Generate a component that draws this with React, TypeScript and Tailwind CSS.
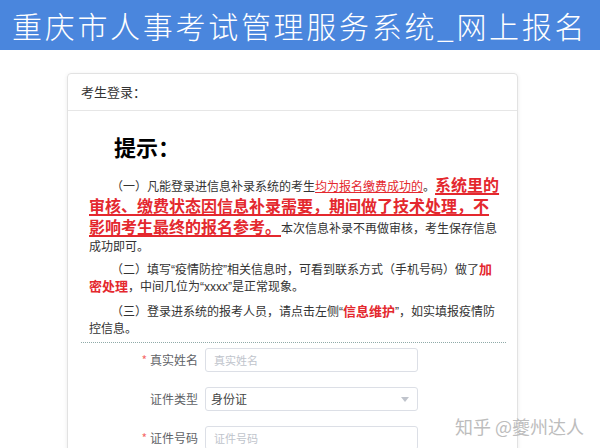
import { ReactNode } from "react";

const red = "text-[#e4282e]";

// narrow curly quotes, as the original page shows them
function Q({ children }: { children: ReactNode }) {
  return <span className="font-['Liberation_Sans',sans-serif] leading-[12px]">{children}</span>;
}

function FormRow({ label, required, children }: { label: string; required?: boolean; children: ReactNode }) {
  return (
    <div className="flex items-center">
      <div className="w-[116px] pr-[7px] text-right text-[12px] text-[#606266]">
        {required && <span className="mr-[3px] text-[#f56c6c]">*</span>}
        {label}
      </div>
      {children}
    </div>
  );
}

export default function App() {
  return (
    <div className="relative h-[448px] w-[600px] overflow-hidden bg-white font-['Noto_Sans_CJK_SC',sans-serif] text-[#333]">
      <header className="flex h-[50px] items-center bg-[#4a86dd] pl-[12px] text-[30px] font-light tracking-[2.7px] text-white">
        重庆市人事考试管理服务系统_网上报名
      </header>

      <div className="pl-[67px] pt-[23px]">
        <div className="w-[451px] rounded-[4px] border border-[#e2e2e2] shadow-[0_1px_4px_rgba(0,0,0,0.08)]">
          <div className="flex h-[37px] items-center border-b border-[#e6e6e6] px-[13px] text-[13px] text-[#333]">
            考生登录：
          </div>

          <div className="pl-[21px] pr-[13px] pt-[22px]">
            <h2 className="pl-[25px] text-[22px] font-bold leading-[26px] text-black">提示：</h2>

            <p className="mt-[15px] indent-[22px] text-[12px] leading-[17px]">
              （一）凡能登录进信息补录系统的考生
              <span className={`${red} underline decoration-[#e4282e]`}>均为报名缴费成功的</span>。
              <span className={`${red} text-[16px] font-bold leading-[21px] underline decoration-2 decoration-[#e4282e] underline-offset-2`}>
                系统里的审核、缴费状态因信息补录需要，期间做了技术处理，不影响考生最终的报名参考。
              </span>
              本次信息补录不再做审核，考生保存信息成功即可。
            </p>

            <p className="mt-[6px] indent-[22px] text-[12px] leading-[17px]">
              （二）填写<Q>“</Q>疫情防控<Q>”</Q>相关信息时，可看到联系方式（手机号码）做了
              <span className={`${red} text-[13px] font-bold leading-[12px]`}>加密处理</span>，中间几位为<Q>“xxxx”</Q>是正常现象。
            </p>

            <p className="mt-[8px] indent-[22px] text-[12px] leading-[17px]">
              （三）登录进系统的报考人员，请点击左侧<Q>“</Q>
              <span className={`${red} text-[13px] font-bold leading-[12px]`}>信息维护</span>
              <Q>”</Q>，如实填报疫情防控信息。
            </p>

            <div className="ml-[-8px] mt-[6px] w-[425px] border-t border-dotted border-[#8faaa8]" />

            <div className="mt-[5px] flex flex-col gap-[15px] pb-[20px]">
              <FormRow label="真实姓名" required>
                <div className="flex h-[24px] w-[213px] items-center rounded-[3px] border border-[#dcdfe6] px-[8px] text-[11px] text-[#c0c4cc]">
                  真实姓名
                </div>
              </FormRow>
              <FormRow label="证件类型">
                <div className="flex h-[24px] w-[213px] items-center justify-between rounded-[3px] border border-[#dcdfe6] pl-[5px] pr-[8px] text-[12px] text-[#444]">
                  身份证
                  <svg width="8" height="5" viewBox="0 0 8 5">
                    <path d="M0 0h8L4 5z" fill="#c0c4cc" />
                  </svg>
                </div>
              </FormRow>
              <FormRow label="证件号码" required>
                <div className="flex h-[24px] w-[213px] items-center rounded-[3px] border border-[#dcdfe6] px-[8px] text-[11px] text-[#c0c4cc]">
                  证件号码
                </div>
              </FormRow>
            </div>
          </div>
        </div>
      </div>

      <div className="absolute left-[455px] top-[413px] text-[18px] text-[#bdbdbd]">知乎 @夔州达人</div>
    </div>
  );
}
